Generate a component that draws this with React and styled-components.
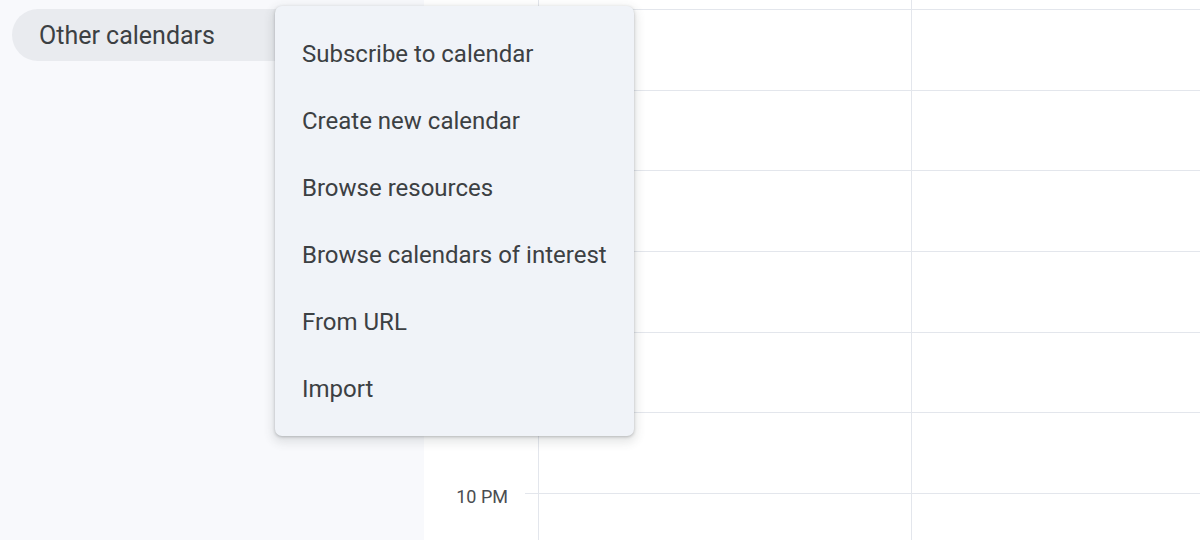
import React from 'react'
import styled, { createGlobalStyle } from 'styled-components'

const GlobalStyle = createGlobalStyle`
  html, body {
    margin: 0;
    padding: 0;
    background: #ffffff;
    font-family: Roboto, 'Noto Sans', sans-serif;
    overflow: hidden;
  }
`

// rows under the open menu keep their labels hidden, only 10 PM shows
const hours = ['', '', '', '', '', '10 PM', '']
const menuItems = [
  'Subscribe to calendar',
  'Create new calendar',
  'Browse resources',
  'Browse calendars of interest',
  'From URL',
  'Import',
]

function App() {
  return (
    <>
      <GlobalStyle />
      <Page>
        <Sidebar>
          <SectionPill>Other calendars</SectionPill>
        </Sidebar>

        <Main>
          <HourRow $h={10}>
            <TimeCell />
            <Tick />
            <DayCell />
            <DayCell />
          </HourRow>
          {hours.map((h, i) => (
            <HourRow key={i}>
              <TimeCell>{h && <TimeLabel>{h}</TimeLabel>}</TimeCell>
              <Tick />
              <DayCell />
              <DayCell />
            </HourRow>
          ))}
        </Main>

        <Menu role="menu">
          {menuItems.map((item) => (
            <MenuItem key={item} role="menuitem">
              {item}
            </MenuItem>
          ))}
        </Menu>
      </Page>
    </>
  )
}

export default App

const Page = styled.div`
  position: relative;
  display: flex;
  width: 1200px;
  height: 540px;
  overflow: hidden;
`

const Sidebar = styled.aside`
  width: 424px;
  flex-shrink: 0;
  background: #f8f9fc;
  padding: 9px 0 0 12px;
  box-sizing: border-box;
`

const SectionPill = styled.div`
  height: 52px;
  width: 400px;
  display: flex;
  align-items: center;
  padding-left: 27px;
  box-sizing: border-box;
  border-radius: 26px;
  background: #e9ebef;
  color: #3c4043;
  font-size: 25px;
`

const Main = styled.main`
  flex: 1;
  display: flex;
  flex-direction: column;
  background: #ffffff;
`

const HourRow = styled.div`
  display: flex;
  height: ${(p) => p.$h || 80.7}px;
  flex-shrink: 0;
`

const TimeCell = styled.div`
  width: 101px;
  flex-shrink: 0;
  display: flex;
  justify-content: flex-end;
  align-items: flex-end;
  padding-right: 17px;
  box-sizing: border-box;
`

const TimeLabel = styled.span`
  font-size: 18px;
  line-height: 20px;
  color: #4a4d51;
  margin-bottom: -13px;
`

const Tick = styled.div`
  width: 13px;
  flex-shrink: 0;
  border-bottom: 1.5px solid #e3e6ec;
`

const DayCell = styled.div`
  width: 373px;
  flex-shrink: 0;
  border-left: 1.5px solid #e3e6ec;
  border-bottom: 1.5px solid #e3e6ec;
  box-sizing: border-box;
`

const Menu = styled.ul`
  position: absolute;
  left: 275px;
  top: 6px;
  width: 359px;
  margin: 0;
  padding: 14px 0;
  list-style: none;
  box-sizing: border-box;
  background: #f0f3f8;
  border-radius: 7px;
  box-shadow: 0 1px 3px rgba(60, 64, 67, 0.3), 0 4px 10px 3px rgba(60, 64, 67, 0.12);
`

const MenuItem = styled.li`
  height: 67px;
  display: flex;
  align-items: center;
  padding-left: 27px;
  color: #3c4043;
  font-size: 24px;
  cursor: pointer;
`
